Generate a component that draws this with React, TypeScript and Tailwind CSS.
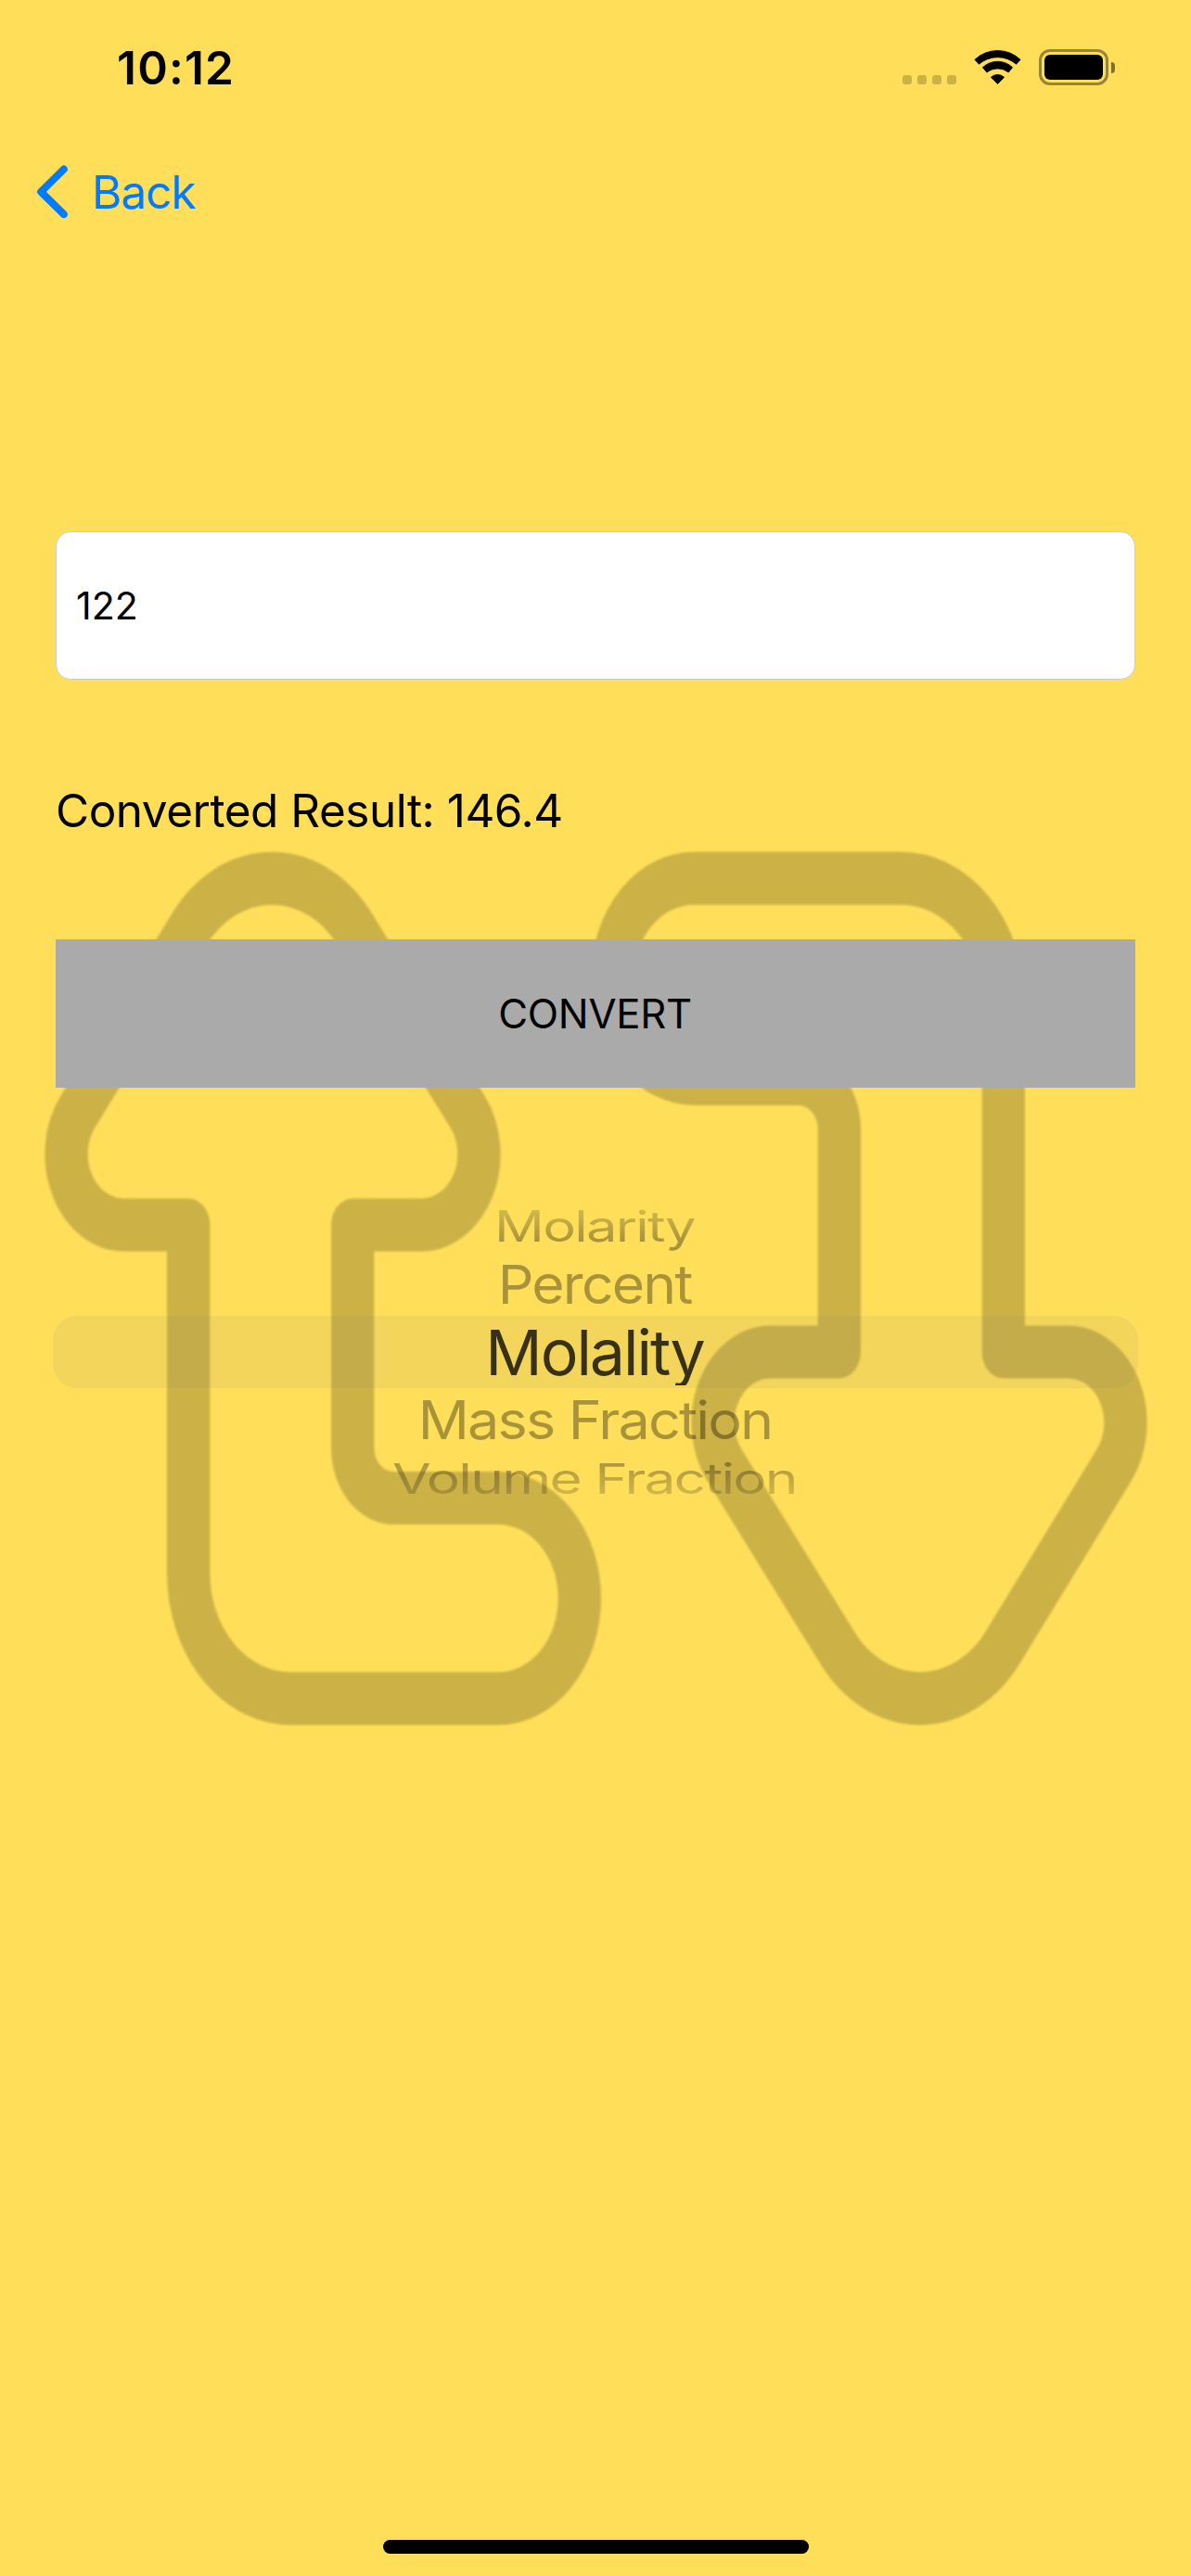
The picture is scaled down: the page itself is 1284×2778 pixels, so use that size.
const ARROW =
  "M203.2 342H133.5A62 62 0 0 1 84.1 242.6L204.4 82.5A111.4 111.4 0 0 1 382 82.5L503.9 242.6A62 62 0 0 1 454.5 342H380.2V537.2A44 44 0 0 0 424.2 581.2H537A87.85 87.85 0 0 1 537 756.9H313.2A110 110 0 0 1 203.2 646.9Z";

function BackgroundArrows() {
  return (
    <svg
      className="pointer-events-none absolute left-0 top-[900px] h-[980px] w-[1284px] text-black/20 blur-[0.8px]"
      viewBox="0 0 1284 796.1"
      preserveAspectRatio="none"
      fill="none"
      stroke="currentColor"
      strokeWidth="46.3"
      strokeLinejoin="round"
      aria-hidden="true"
    >
      <path d={ARROW} />
      <path d={ARROW} transform="rotate(180 642.5 397.6)" />
    </svg>
  );
}

function WifiIcon() {
  return (
    <svg
      className="h-[40px] w-[53px]"
      viewBox="0 0 53 40"
      fill="currentColor"
      stroke="currentColor"
      strokeWidth="0.8"
      strokeLinejoin="round"
    >
      <path d="M1.9 12.3A35.8 35.8 0 0 1 51.1 12.3L46.6 17.2A30.7 30.7 0 0 0 6.4 17.2Z" />
      <path d="M10.4 20.7A23.4 23.4 0 0 1 42.6 20.7L38.2 26A19 19 0 0 0 14.8 26Z" />
      <path d="M19.3 31.3A10.5 10.5 0 0 1 33.7 31.3L26.5 38.6Z" />
    </svg>
  );
}

function Battery() {
  return (
    <div className="flex items-center gap-[3px]">
      <div className="h-[39px] w-[75px] rounded-[12px] border-[3px] border-black/40 p-[3px]">
        <div className="h-full w-full rounded-[6px] bg-black" />
      </div>
      <div className="h-[12px] w-[4px] rounded-r-full bg-black/50" />
    </div>
  );
}

function StatusBar() {
  return (
    <header className="flex h-[144px] items-center justify-between pl-[126px] pr-[82px]">
      <span className="pt-[4px] text-[49.5px] font-semibold leading-none tracking-[1.2px]">10:12</span>
      <div className="flex h-[40px] items-end gap-[18px]">
        <div className="mb-[1px] flex gap-[6px]">
          {[0, 1, 2, 3].map((dot) => (
            <span key={dot} className="size-[10px] rounded-[3px] bg-black/20" />
          ))}
        </div>
        <WifiIcon />
        <Battery />
      </div>
    </header>
  );
}

function UnitPicker() {
  const row = "flex items-center justify-center whitespace-nowrap text-[68px] tracking-[-2px]";
  return (
    <div className="mx-[57px] mt-[119px]">
      <div className={`${row} h-[59px] pr-[3px] leading-[84px]`}>
        <span className="shrink-0 scale-x-[0.877] scale-y-[0.676] bg-linear-to-b from-black/17 from-20% to-black/34 to-80% bg-clip-text text-transparent">
          Molarity
        </span>
      </div>
      <div className={`${row} h-[68px] pr-[2px] leading-[84px] text-black/34`}>
        <span className="shrink-0 scale-x-[0.892] scale-y-[0.852]">Percent</span>
      </div>
      <div className={`${row} h-[78px] rounded-[26px] bg-[#747480]/8 pr-[2px] leading-[72px]`}>
        <span className="block h-[72px] overflow-hidden text-black/77">Molality</span>
      </div>
      <div className={`${row} h-[68px] pr-[2px] leading-[84px] text-black/34`}>
        <span className="shrink-0 scale-x-[0.898] scale-y-[0.84]">Mass Fraction</span>
      </div>
      <div className={`${row} h-[57px] pr-[2px] leading-[84px]`}>
        <span className="shrink-0 scale-x-[0.89] scale-y-[0.67] bg-linear-to-b from-black/32 from-20% to-black/18 to-80% bg-clip-text text-transparent">
          Volume Fraction
        </span>
      </div>
    </div>
  );
}

export default function App() {
  return (
    <div className="relative flex h-[2778px] w-[1284px] flex-col overflow-hidden bg-[#ffde59] font-[Inter,sans-serif] text-black">
      <BackgroundArrows />
      <div className="relative flex flex-1 flex-col">
        <StatusBar />
        <nav className="flex h-[126px] items-center pl-[38px]">
          <button className="flex items-center text-[#007aff]">
            <svg
              className="h-[60px] w-[36px]"
              viewBox="0 0 36 60"
              fill="none"
              stroke="currentColor"
              strokeWidth="8"
              strokeLinecap="round"
              strokeLinejoin="round"
            >
              <path d="M30.8 5.5L6.2 29.8L30.8 54.1" />
            </svg>
            <span className="ml-[25px] pt-[2px] text-[49.5px] leading-none tracking-[-1px]">Back</span>
          </button>
        </nav>
        <main className="flex flex-col">
          <input
            className="mx-[60px] mt-[303px] h-[160px] rounded-[16px] border border-[#cccccc] bg-white pl-[21px] text-[41px] outline-none"
            defaultValue="122"
          />
          <p className="mt-[101px] h-[80px] pl-[60px] text-[49.5px] leading-[80px] tracking-[-0.5px]">
            Converted Result: 146.4
          </p>
          <button className="mx-[60px] mt-[99px] h-[160px] bg-[#aaaaaa] pr-[1px] pt-[1px] text-[43.6px] tracking-[-0.25px]">
            CONVERT
          </button>
          <UnitPicker />
        </main>
        <div className="mx-auto mb-[24px] mt-auto h-[15px] w-[459px] rounded-full bg-black" />
      </div>
    </div>
  );
}
